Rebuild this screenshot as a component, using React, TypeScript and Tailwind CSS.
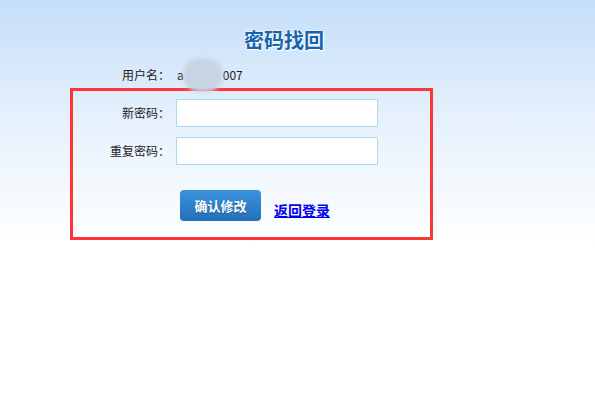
import React from 'react';

const font = { fontFamily: '"Noto Sans CJK SC", "Liberation Sans", sans-serif' };

export default function App() {
    return (
        <div className="min-h-[398px] w-full bg-[linear-gradient(to_bottom,#c5def8_0px,#e6f1fc_120px,#ffffff_245px)]" style={font}>
            <div className="pl-[70px] pt-[26px]">
                <h1 className="pl-[174px] text-[20px] leading-[28px] font-bold text-[#1763ad] [text-shadow:0_0_2px_#fff,0_0_2px_#fff,1px_1px_1px_#fff]">
                    密码找回
                </h1>
                <div className="relative z-10 mt-[10px] flex h-[22px] items-center text-[12px] text-[#222]">
                    <span className="w-[100px] text-right">用户名：</span>
                    <span className="ml-[7px] flex items-center">
                        a
                        <span className="relative inline-block h-[22px] w-[39px]">
                            <span className="absolute left-[-1px] top-[-6px] h-[34px] w-[40px] rounded-full bg-[#c6d4e3] blur-[2px]"></span>
                        </span>
                        007
                    </span>
                </div>
                <div className="mt-[2px] h-[152px] w-[363px] border-[3px] border-[#ff3535] pt-[8px] text-[12px] text-[#222]">
                    <div className="flex items-center">
                        <label className="w-[97px] text-right">新密码：</label>
                        <input type="password" className="ml-[6px] h-[28px] w-[202px] border border-[#a9dcee] bg-white outline-none" />
                    </div>
                    <div className="mt-[10px] flex items-center">
                        <label className="w-[97px] text-right">重复密码：</label>
                        <input type="password" className="ml-[6px] h-[28px] w-[202px] border border-[#a9dcee] bg-white outline-none" />
                    </div>
                    <div className="mt-[25px] flex items-end">
                        <button className="ml-[107px] h-[31px] w-[81px] rounded-[4px] bg-[linear-gradient(to_bottom,#3b92dc,#2470bc)] text-[13px] font-bold text-white [text-shadow:0_1px_1px_rgba(0,0,0,0.3)]">
                            确认修改
                        </button>
                        <a href="#" className="mb-[2px] ml-[13px] text-[14px] leading-[18px] font-bold text-[#0000ee] underline">
                            返回登录
                        </a>
                    </div>
                </div>
            </div>
        </div>
    );
}
